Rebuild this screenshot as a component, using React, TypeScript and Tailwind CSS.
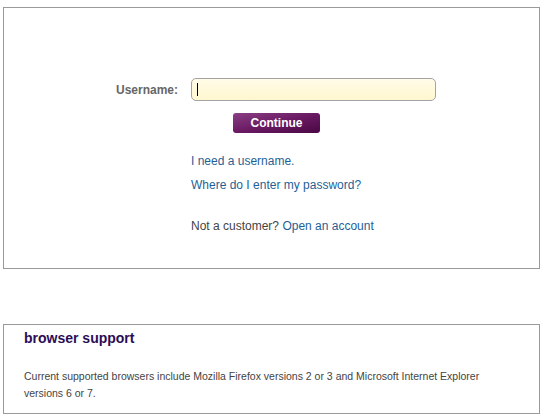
export default function App() {
  return (
    <div className="min-h-[419px] bg-white px-[3px] pt-[7px] font-['Liberation_Sans',Arial,sans-serif]">
      {/* Login box */}
      <div className="h-[262px] border border-[#9a9a9a] pt-[70px]">
        <div className="flex items-center">
          <label className="w-[174px] text-right text-[12px] font-bold text-[#666666]">
            Username:
          </label>
          <div className="ml-[13px] flex h-[23px] w-[245px] items-center rounded-[5px] border border-[#a3a3a3] bg-gradient-to-b from-[#fffce8] to-[#fff7cf] pl-[5px]">
            <span className="h-[13px] w-px bg-black"></span>
          </div>
        </div>

        <div className="ml-[229px] mt-[12px]">
          <button className="flex h-[20px] w-[87px] items-center justify-center rounded-[3px] bg-gradient-to-br from-[#8c3f85] via-[#6a1a63] to-[#4a0744] text-[12px] font-bold text-white">
            Continue
          </button>
        </div>

        <div className="ml-[187px] mt-[16px] text-[12px] leading-6">
          <p className="text-[#1f5f96]">I need a username.</p>
          <p className="text-[#1f5f96]">Where do I enter my password?</p>
          <p className="mt-[17px] text-[#444444]">
            Not a customer? <span className="text-[#1f5f96]">Open an account</span>
          </p>
        </div>
      </div>

      {/* Browser support */}
      <div className="mt-[55px] h-[90px] border border-[#9a9a9a] pl-[20px] pr-[20px] pt-[5px]">
        <h2 className="text-[14px] font-bold leading-4 text-[#2b0d55]">browser support</h2>
        <p className="mt-[22px] text-[10.5px] leading-[17px] text-[#444444]">
          Current supported browsers include Mozilla Firefox versions 2 or 3 and Microsoft Internet Explorer versions 6 or 7.
        </p>
      </div>
    </div>
  );
}
